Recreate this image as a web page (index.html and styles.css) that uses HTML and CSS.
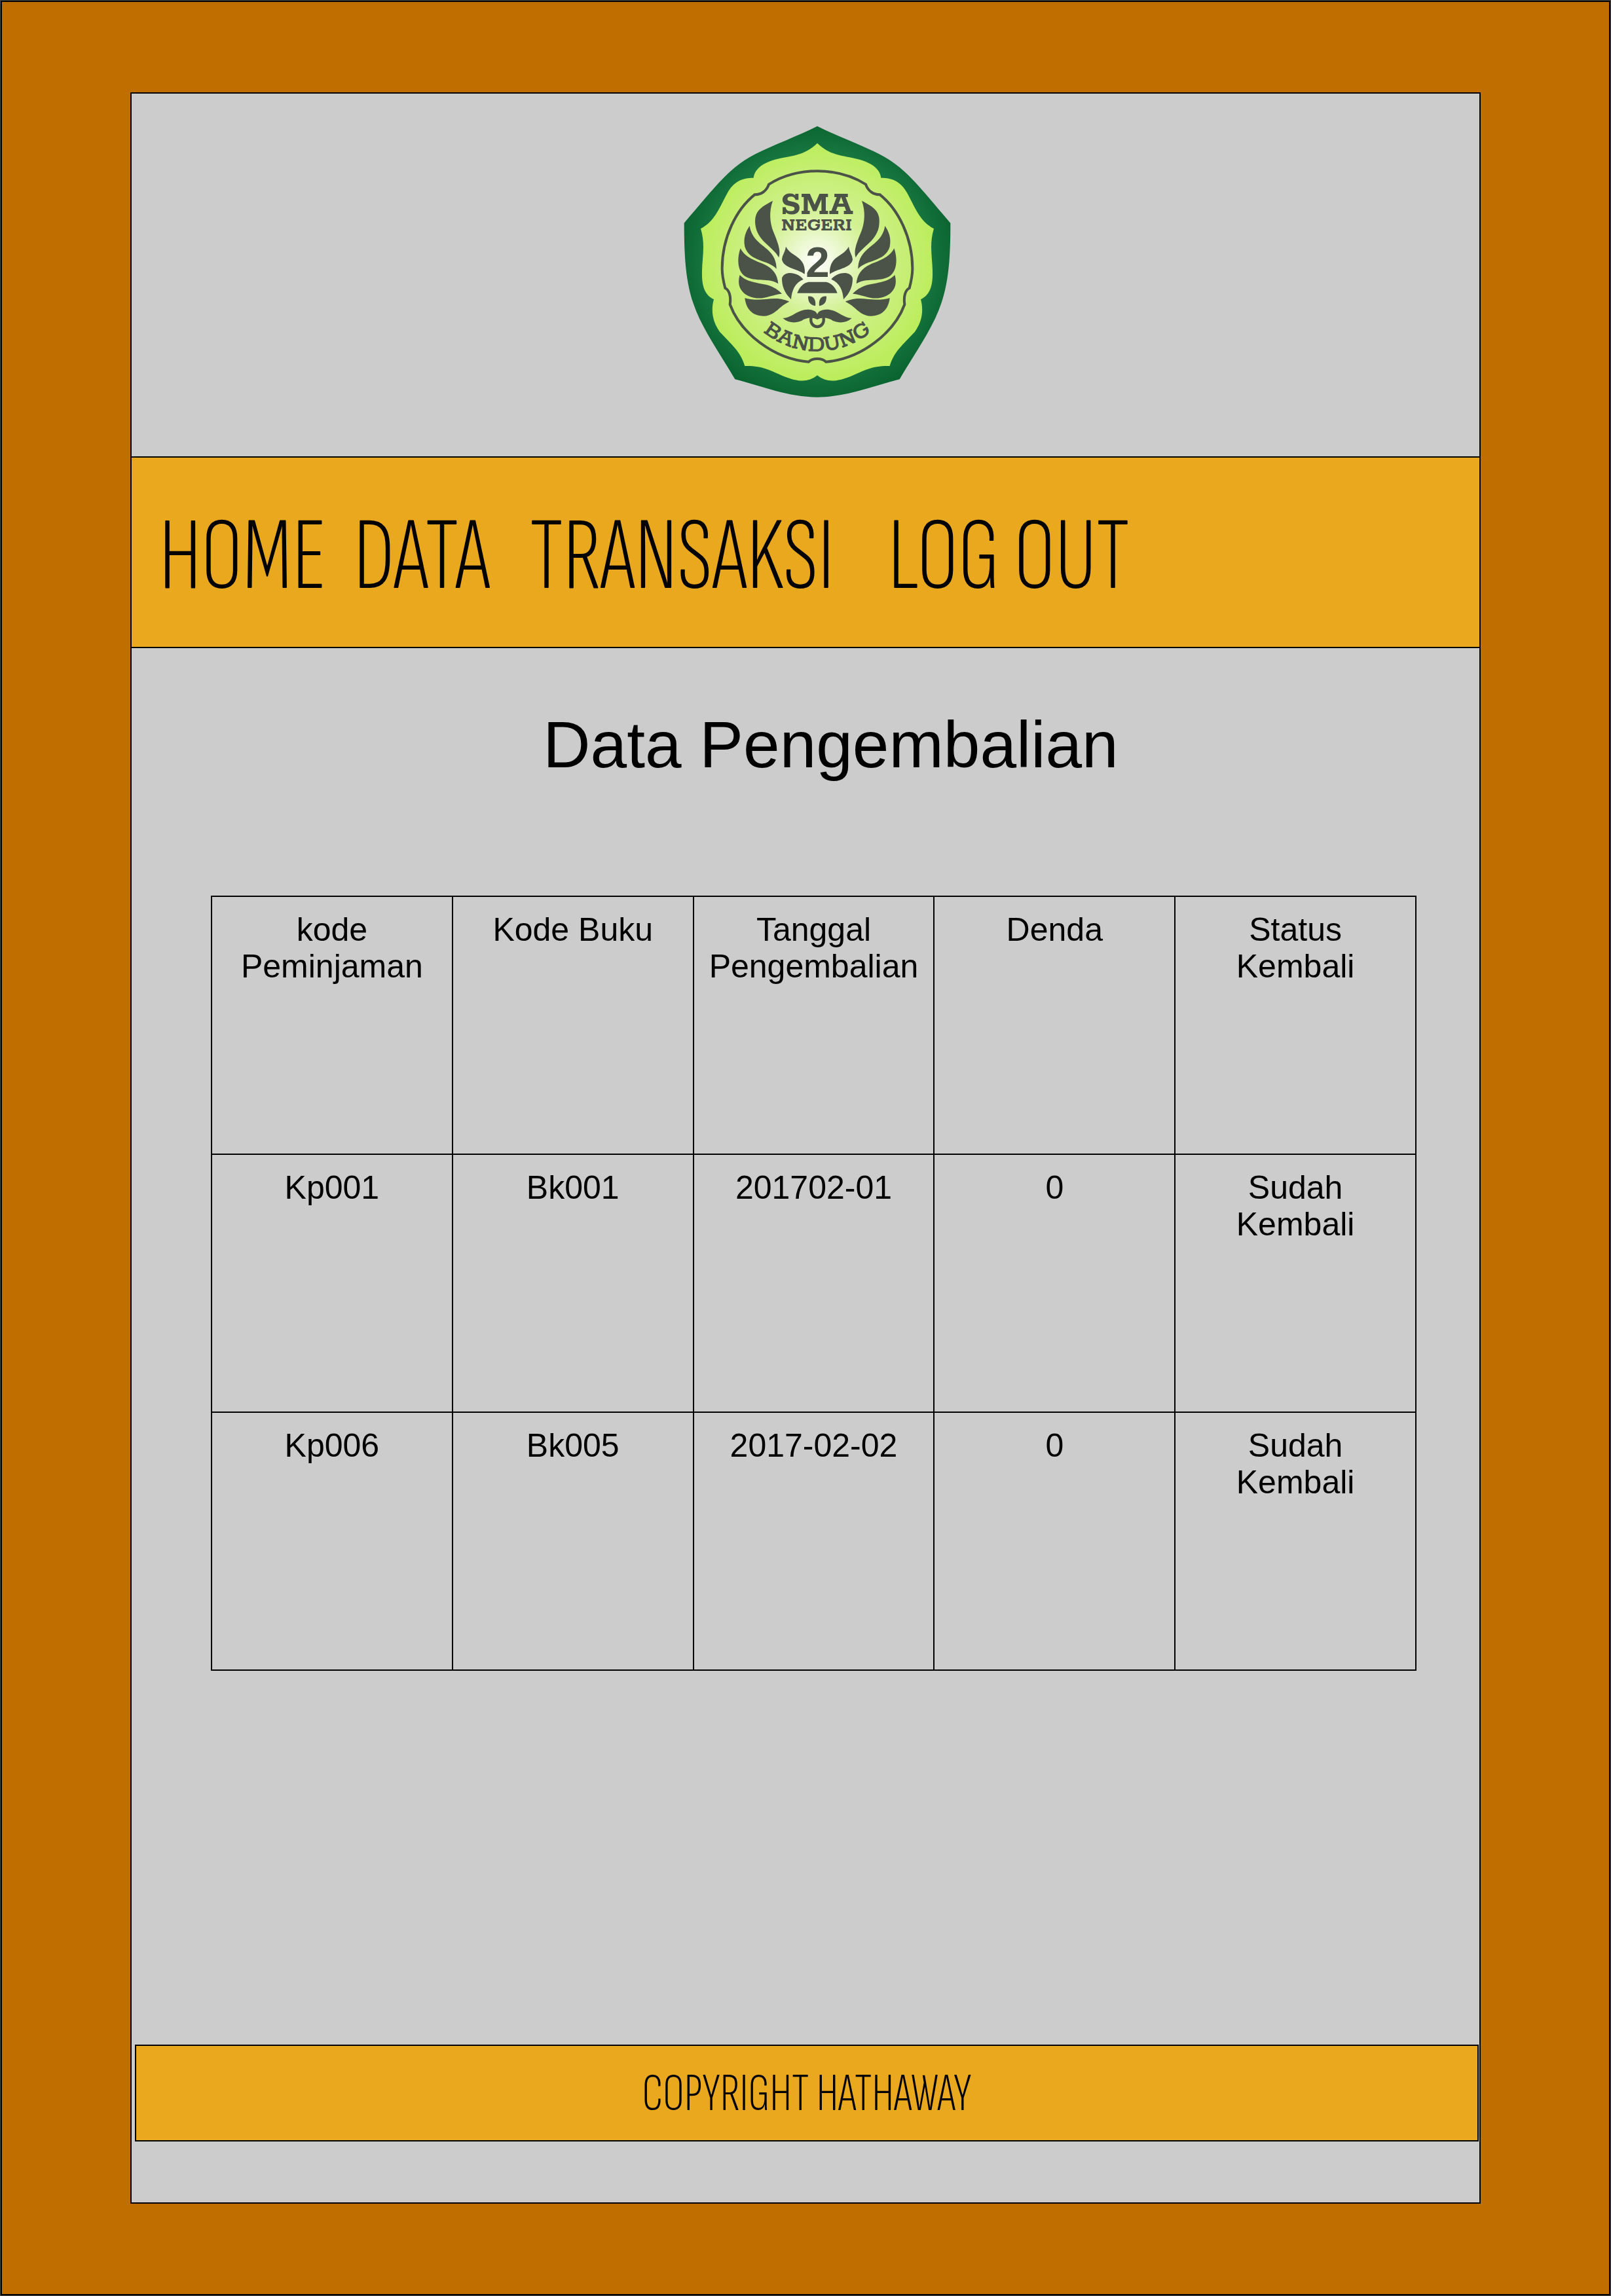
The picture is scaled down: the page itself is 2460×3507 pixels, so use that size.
FILE: index.html
```html
<!DOCTYPE html>
<html lang="id">
<head>
<meta charset="utf-8">
<meta name="viewport" content="width=device-width, initial-scale=1">
<title>Data Pengembalian</title>
<link rel="stylesheet" href="styles.css">
</head>
<body>
<div class="page">
  <div class="panel">
    <header class="header">
      <svg class="logo" viewBox="40 36 1224 1248" role="img" aria-label="SMA Negeri 2 Bandung">
        <defs>
          <radialGradient id="rim" gradientUnits="userSpaceOnUse" cx="652" cy="660" r="640">
            <stop offset="0.7" stop-color="#1d7d45"/>
            <stop offset="1" stop-color="#0a6430"/>
          </radialGradient>
          <radialGradient id="field" gradientUnits="userSpaceOnUse" cx="652" cy="660" r="540">
            <stop offset="0" stop-color="#ffffff"/>
            <stop offset="0.2" stop-color="#ebf8d0"/>
            <stop offset="0.45" stop-color="#d2f192"/>
            <stop offset="1" stop-color="#bced5c"/>
          </radialGradient>
          <path id="bandung" d="M260 678A392 392 0 0 0 1044 678"/>
          <g id="half">
            <path fill="url(#rim)" d="M652 38C560 84 450 125 370 165C250 225 190 310 42 482C42 640 50 750 84 850C120 960 200 1070 275 1198C400 1230 520 1280 652 1280Z"/>
            <path fill="url(#field)" d="M652 116C600 165 560 170 490 184C420 198 366 225 360 275C310 275 270 290 240 345C200 420 180 475 118 508C140 580 125 640 124 700C122 770 135 810 178 832C165 880 170 930 205 980C260 1040 300 1070 320 1137C400 1135 430 1155 500 1185C570 1212 610 1212 652 1180Z"/>
            <path fill="none" stroke="#4b5247" stroke-width="12" d="M652 244C570 244 490 267 430 305C420 335 395 352 365 352C280 420 216 550 216 690C216 720 222 750 230 780C250 790 257 820 252 855C300 985 450 1105 612 1118C625 1106 640 1104 652 1104"/>
            <g fill="#4b5247">
              <path d="M448 380C430 430 435 480 450 520C475 580 485 610 476 640C450 590 385 570 370 500C358 430 390 410 448 380Z"/>
              <path d="M342 495C350 550 390 575 420 600C455 630 465 660 465 692C430 650 340 660 320 590C312 550 325 520 342 495Z"/>
              <path d="M300 598C320 640 370 655 410 672C450 690 470 720 473 760C430 730 370 755 320 725C284 700 285 640 300 598Z"/>
              <path d="M297 720C330 755 380 755 420 765C455 775 475 790 490 806C440 810 400 840 345 820C295 800 285 760 297 720Z"/>
              <path d="M320 826C370 842 430 825 470 828C500 832 515 838 524 842C480 860 460 905 410 908C350 910 325 870 320 826Z"/>
              <path d="M508 590C530 630 570 630 588 670C595 690 596 700 594 716C560 690 500 690 490 650C492 625 503 620 508 590Z"/>
              <path d="M588 740C550 755 535 790 532 832C500 800 490 770 490 735C500 700 560 705 588 740Z"/>
              <path d="M652 752H612C590 755 570 775 560 803H652Z"/>
              <path d="M610 818C640 815 646 840 643 862C615 855 610 840 610 818Z"/>
              <path d="M494 918C540 915 560 878 610 878C635 879 648 888 652 900V924C630 912 600 915 580 930C550 942 520 940 494 918Z"/>
            </g>
            <path fill="none" stroke="#4b5247" stroke-width="13" d="M624 915C618 940 634 957 652 957"/>
          </g>
        </defs>
        <use href="#half"/>
        <use href="#half" transform="translate(1304) scale(-1 1)"/>
        <g class="logo-text">
          <text class="logo-sma" x="650" y="440">SMA</text>
          <text class="logo-negeri" x="649" y="516">NEGERI</text>
          <text class="logo-two" x="653" y="730">2</text>
          <text class="logo-bandung"><textPath href="#bandung" startOffset="50%">BANDUNG</textPath></text>
        </g>
      </svg>
    </header>

    <nav class="nav">
      <a class="nav-link" href="#">HOME</a>
      <a class="nav-link" href="#">DATA</a>
      <a class="nav-link" href="#">TRANSAKSI</a>
      <a class="nav-link" href="#">LOG OUT</a>
    </nav>

    <main class="content">
      <h1 class="title">Data Pengembalian</h1>
      <table class="returns">
        <thead>
          <tr><th>kode Peminjaman</th><th>Kode Buku</th><th>Tanggal Pengembalian</th><th>Denda</th><th>Status Kembali</th></tr>
        </thead>
        <tbody>
          <tr><td>Kp001</td><td>Bk001</td><td>201702-01</td><td>0</td><td>Sudah Kembali</td></tr>
          <tr><td>Kp006</td><td>Bk005</td><td>2017-02-02</td><td>0</td><td>Sudah Kembali</td></tr>
        </tbody>
      </table>
    </main>

    <footer class="footer">COPYRIGHT HATHAWAY</footer>
  </div>
</div>
</body>
</html>
```
FILE: styles.css
```css
* { box-sizing: border-box; }

html { background: #4a4a48; }

body {
  margin: 0;
  padding: 1px;
  color: #000;
  font-family: "Liberation Sans", Arial, sans-serif;
}

.page {
  display: flex;
  min-height: calc(100vh - 2px);
  padding: 138px 196px;
  border: 2px solid #000;
  background: #c06e00;
}

.panel {
  display: flex;
  flex: 1;
  flex-direction: column;
  min-width: 0;
  border: 2px solid #000;
  background: #ccc;
}

.header {
  display: flex;
  justify-content: center;
  height: 554px;
  padding: 49px 0 0 36px;
}

.logo {
  width: 408px;
  height: 416px;
}

.logo-text {
  fill: #4b5247;
  font-family: Rokkitt, "Liberation Serif", serif;
  font-weight: 700;
  text-anchor: middle;
}

.logo-sma { font-size: 160px; }
.logo-negeri { font-size: 90px; }

.logo-bandung {
  font-size: 112px;
  font-weight: 600;
}

.logo-two {
  font-family: "Liberation Sans", Arial, sans-serif;
  font-size: 196px;
}

.nav {
  display: grid;
  grid-template-columns: 297px 269px 547px auto;
  align-items: center;
  height: 293px;
  padding: 14px 0 0 42px;
  border: solid #000;
  border-width: 2px 0;
  background: #e9a81e;
}

.nav-link {
  color: #000;
  font-family: "Sofia Sans Extra Condensed", "Roboto Condensed", sans-serif;
  font-size: 158px;
  font-weight: 300;
  line-height: 180px;
  text-decoration: none;
  white-space: nowrap;
}

.content { padding: 91px 96px 96px 121px; }

.title {
  margin: 0 0 175px;
  padding-left: 52px;
  font-size: 100px;
  font-weight: 400;
  line-height: 112px;
  text-align: center;
}

.returns {
  width: 100%;
  border-collapse: collapse;
  table-layout: fixed;
}

.returns th,
.returns td {
  height: 394px;
  padding: 22px 20px;
  border: 2px solid #000;
  font-size: 50px;
  font-weight: 400;
  line-height: 56px;
  text-align: center;
  vertical-align: top;
}

.footer {
  display: grid;
  place-items: center;
  height: 148px;
  margin: auto 1px 93px 5px;
  padding-top: 4px;
  border: 2px solid #000;
  background: #e9a81e;
  font-family: "Sofia Sans Extra Condensed", "Roboto Condensed", sans-serif;
  font-size: 82px;
  font-weight: 300;
  line-height: 92px;
}
```
